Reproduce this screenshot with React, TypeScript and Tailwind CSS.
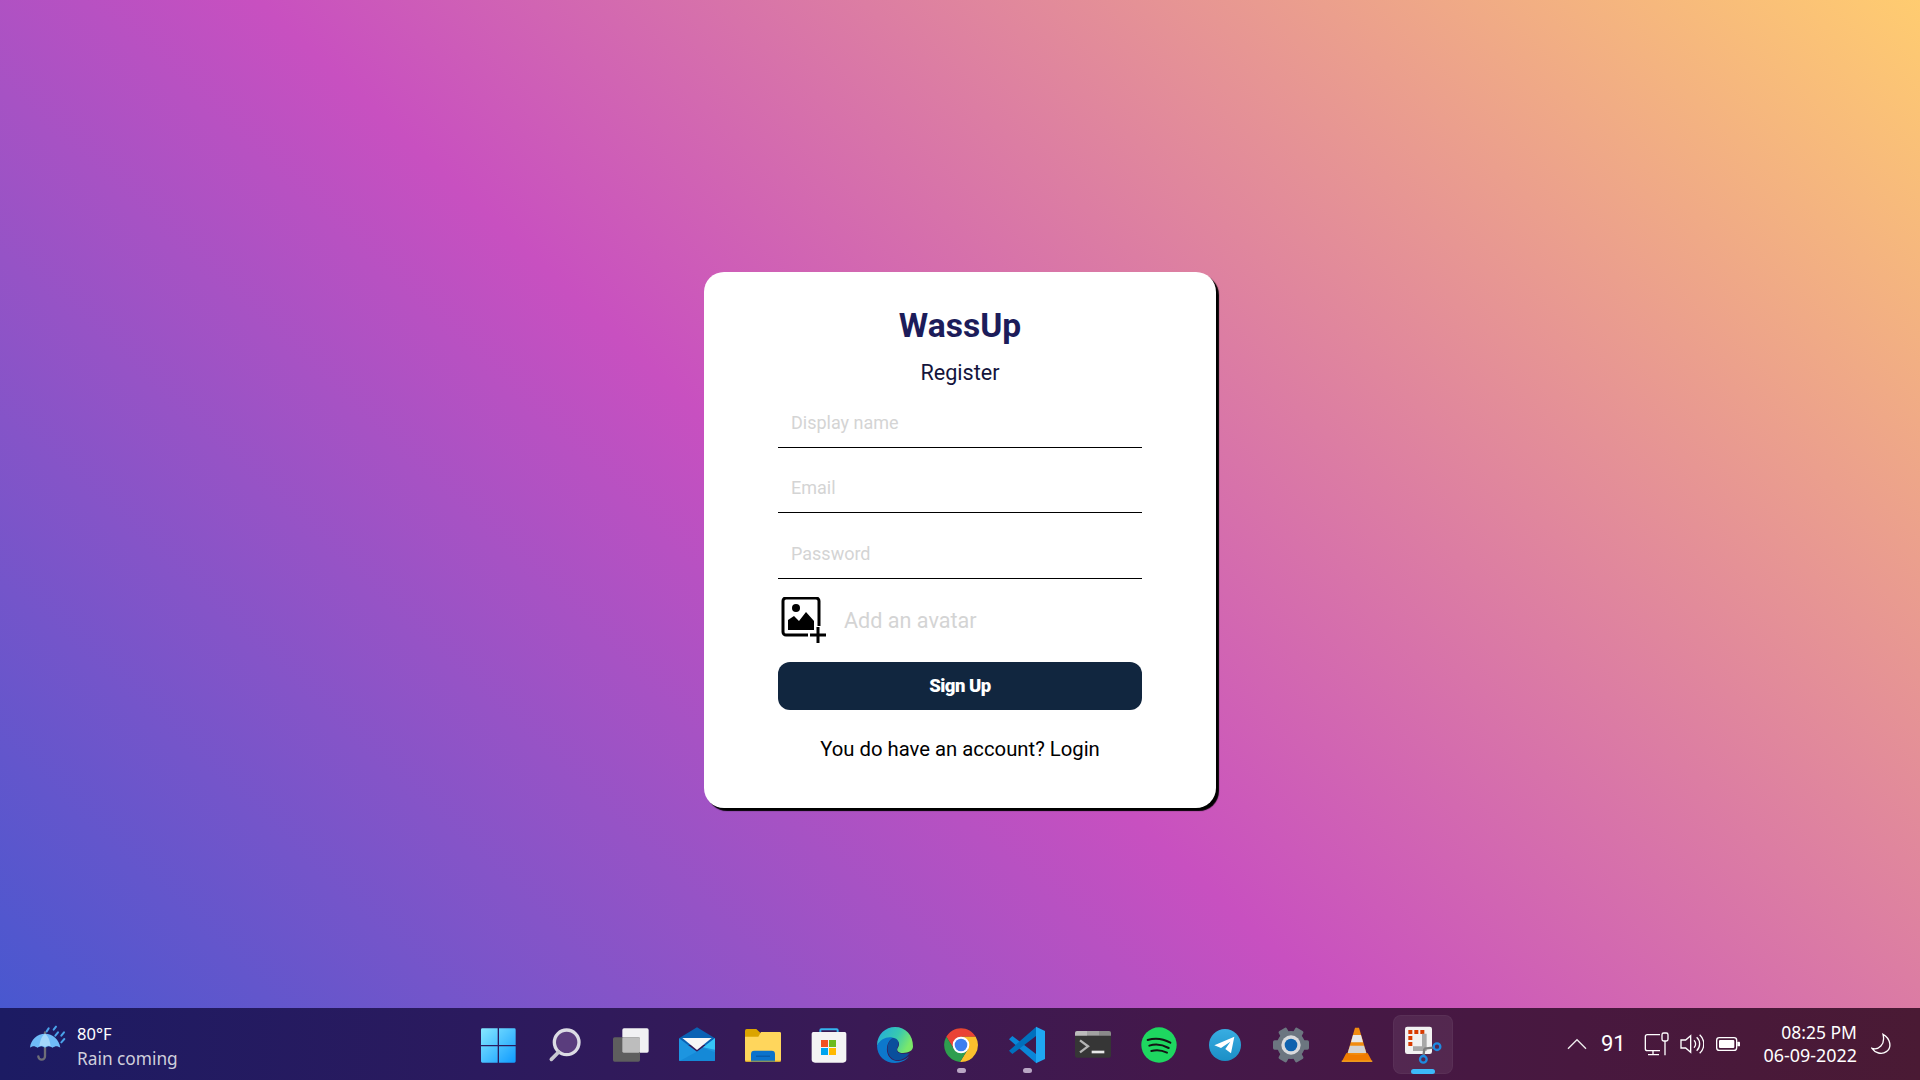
import React from 'react';

const Icon: React.FC<{ children: React.ReactNode }> = ({ children }) => (
  <svg className="w-[44px] h-[44px]" viewBox="-66 -66 132 132">{children}</svg>
);

const WindowsIcon = () => (
  <Icon>
    <defs>
      <linearGradient id="win" x1="0" y1="0" x2="1" y2="1">
        <stop offset="0" stopColor="#86e8ff" />
        <stop offset="1" stopColor="#0f9bff" />
      </linearGradient>
    </defs>
    <path fill="url(#win)" d="M-54 -46a4 4 0 0 1 4-4H-4V0H-54ZM0 -50H46a4 4 0 0 1 4 4V0H0ZM-54 4H-4V53H-50a4 4 0 0 1-4-4ZM0 4H50V49a4 4 0 0 1-4 4H0Z" />
  </Icon>
);

const SearchIcon = () => (
  <Icon>
    <circle cx="5" cy="-8" r="37" fill="#5a3d7d" stroke="#dcdce4" strokeWidth="10" />
    <path d="M-19 21L-41 43" stroke="#c8c8d0" strokeWidth="11" strokeLinecap="round" />
  </Icon>
);

const TaskViewIcon = () => (
  <Icon>
    <rect x="-26" y="-50" width="79" height="73" rx="5" fill="#f1f1f3" />
    <rect x="-54" y="-23" width="81" height="73" rx="5" fill="#5e5e5e" />
    <rect x="-26" y="-23" width="53" height="46" rx="4" fill="#bdbdbd" />
  </Icon>
);

const MailIcon = () => (
  <Icon>
    <path fill="#0a62b4" d="M-54 -20L0 -53L54 -20V0H-54Z" />
    <path fill="#f7f7f7" d="M-44 -21H44L0 15Z" />
    <path fill="#1d95e0" d="M-54 -20L0 20L54 -20V46a2 2 0 0 1-2 2H-52a2 2 0 0 1-2-2Z" />
    <path fill="#36c5f7" d="M54 -20V14L18 7Z" />
    <path fill="#0f7fd0" d="M54 48V22L18 8L-4 22L-52 48Z" opacity="0.55" />
  </Icon>
);

const FolderIcon = () => (
  <Icon>
    <path fill="#dba400" d="M-54 -43a5 5 0 0 1 5-5H-20L-4 -33V-10H-54Z" />
    <path fill="#ffd65c" d="M-54 -25L-14 -25L-6 -39H50a4 4 0 0 1 4 4V46a4 4 0 0 1-4 4H-50a4 4 0 0 1-4-4Z" />
    <path fill="#0a72cc" d="M-36 27a10 10 0 0 1 10-10H26a10 10 0 0 1 10 10V50H-36Z" />
    <rect x="-21" y="32" width="42" height="3" fill="#07529b" />
    <rect x="-54" y="47" width="108" height="3" fill="#e0a800" opacity="0.7" />
  </Icon>
);

const StoreIcon = () => (
  <Icon>
    <path d="M-26 -27V-44a3 3 0 0 1 3-3H23a3 3 0 0 1 3 3V-27" fill="none" stroke="#35b4ee" strokeWidth="6" />
    <path fill="#f4f4f4" d="M-52 -34a5 5 0 0 1 5-5H47a5 5 0 0 1 5 5V43a10 10 0 0 1-10 10H-42a10 10 0 0 1-10-10Z" />
    <rect x="-24" y="-15" width="21" height="21" fill="#f25022" />
    <rect x="0" y="-15" width="21" height="21" fill="#6cbb1f" />
    <rect x="-24" y="9" width="21" height="21" fill="#00a4ef" />
    <rect x="0" y="9" width="21" height="21" fill="#ffb900" />
  </Icon>
);

const EdgeIcon = () => (
  <Icon>
    <defs>
      <linearGradient id="edgeTop" x1="0" y1="0" x2="1" y2="0.4">
        <stop offset="0" stopColor="#22a8e0" />
        <stop offset="0.6" stopColor="#38c9b0" />
        <stop offset="1" stopColor="#7be86a" />
      </linearGradient>
    </defs>
    <path fill="url(#edgeTop)" d="M-54 2C-54 -32 -28 -54 0 -54C32 -54 54 -30 54 4C54 18 40 24 24 24C8 24 4 16 8 9C12 2 14 -4 10 -10C-2 -26 -32 -24 -54 2Z" />
    <path fill="#0d78cc" d="M-54 2C-44 -18 -24 -26 -6 -22C-22 -12 -28 8 -22 26C-16 44 2 52 22 46C30 44 38 38 42 34C32 48 16 54 0 54C-30 54 -54 32 -54 2Z" />
    <path fill="#0a4f9c" d="M-6 -22C8 -20 16 -8 8 6C2 16 8 26 22 26C30 26 38 26 44 24C34 40 14 50 -2 44C-26 34 -30 -6 -6 -22Z" />
  </Icon>
);

const ChromeIcon = () => (
  <Icon>
    <circle r="51" fill="#3a2a44" />
    <path fill="#ea4335" d="M-44 -25A51 51 0 0 1 44 -25L0 -25L-21 12Z" />
    <path fill="#fbc02d" d="M44 -25A51 51 0 0 1 -3 51L21 12L0 -25Z" />
    <path fill="#2e9e4f" d="M-3 51A51 51 0 0 1 -44 -25L-21 12L21 12Z" />
    <circle r="25" fill="#fff" />
    <circle r="19" fill="#3b7ff0" />
  </Icon>
);

const VsCodeIcon = () => (
  <Icon>
    <path fill="#0a86d8" d="M-54 -17L-44 -27L28 28V55Z" />
    <path fill="#0070bd" d="M28 -55V-28L-44 27L-54 17Z" />
    <path fill="#1fa7f2" d="M27 -55L54 -42V42L27 55Z" />
  </Icon>
);

const TerminalIcon = () => (
  <Icon>
    <rect x="-54" y="-42" width="108" height="80" rx="6" fill="#363636" />
    <path fill="#bcbcbc" d="M-54 -36a6 6 0 0 1 6-6H-18V-28H-54Z" />
    <rect x="-18" y="-42" width="36" height="14" fill="#a2a2a2" />
    <path fill="#8a8a8a" d="M18 -42H48a6 6 0 0 1 6 6V-28H18Z" />
    <path d="M-39 -14L-15 4L-39 22" fill="none" stroke="#b4b4b4" strokeWidth="7" />
    <rect x="-4" y="17" width="38" height="8" fill="#e8e8e8" />
  </Icon>
);

const SpotifyIcon = () => (
  <Icon>
    <circle r="53" fill="#1ed760" />
    <g fill="none" stroke="#141414" strokeWidth="6" strokeLinecap="round">
      <path d="M-34 -15Q0 -26 34 -7" />
      <path d="M-29 2Q0 -7 29 9" />
      <path d="M-23 18Q0 11 24 23" />
    </g>
  </Icon>
);

const TelegramIcon = () => (
  <Icon>
    <defs>
      <linearGradient id="tg" x1="0" y1="0" x2="0" y2="1">
        <stop offset="0" stopColor="#38ade2" />
        <stop offset="1" stopColor="#1b8fc6" />
      </linearGradient>
    </defs>
    <circle r="48" fill="url(#tg)" />
    <path fill="#fff" d="M-32 1L28 -25L18 25L1 12L16 -10L-12 9Z" />
  </Icon>
);

const SettingsIcon = () => (
  <Icon>
    <g fill="#6c7680">
      <circle r="42" />
      {[0, 60, 120, 180, 240, 300].map(a => (
        <rect key={a} x="32" y="-14" width="22" height="28" rx="5" transform={`rotate(${a})`} />
      ))}
    </g>
    <circle r="29" fill="#d9dadc" />
    <circle r="19" fill="#0f62ae" />
  </Icon>
);

const VlcIcon = () => (
  <Icon>
    <path fill="#f28c0f" d="M-6 -52H6L30 30H-30Z" />
    <path fill="#e8e8e8" d="M-12 -30H12L18 -8H-18Z" />
    <path fill="#d4d4d4" d="M-21 2H21L28 24H-28Z" />
    <path fill="#f07c00" d="M-32 24C-20 32 20 32 32 24L46 50H-46Z" />
    <path fill="#fdb52a" d="M-46 47H46V50H-46Z" />
  </Icon>
);

const SnipIcon = () => (
  <Icon>
    <rect x="-54" y="-55" width="81" height="82" rx="7" fill="#f2f2f2" />
    <g fill="#d83b01">
      <rect x="-44" y="-45" width="12" height="12" />
      <rect x="-26" y="-45" width="12" height="12" />
      <rect x="-8" y="-45" width="12" height="12" />
      <rect x="-44" y="-27" width="12" height="12" />
      <rect x="-44" y="-9" width="12" height="12" />
    </g>
    <path d="M-30 11H4V-34" fill="none" stroke="#a8a8a8" strokeWidth="14" />
    <path d="M4 11L36 7M4 11L1 36" stroke="#7c7c7c" strokeWidth="7" />
    <circle cx="42" cy="5" r="10" fill="none" stroke="#1e8ae0" strokeWidth="7" />
    <circle cx="1" cy="43" r="10" fill="none" stroke="#1e8ae0" strokeWidth="7" />
  </Icon>
);

const apps = [
  { key: 'windows', icon: <WindowsIcon /> },
  { key: 'search', icon: <SearchIcon /> },
  { key: 'taskview', icon: <TaskViewIcon /> },
  { key: 'mail', icon: <MailIcon /> },
  { key: 'folder', icon: <FolderIcon /> },
  { key: 'store', icon: <StoreIcon /> },
  { key: 'edge', icon: <EdgeIcon /> },
  { key: 'chrome', icon: <ChromeIcon />, running: true },
  { key: 'vscode', icon: <VsCodeIcon />, running: true },
  { key: 'terminal', icon: <TerminalIcon /> },
  { key: 'spotify', icon: <SpotifyIcon /> },
  { key: 'telegram', icon: <TelegramIcon /> },
  { key: 'settings', icon: <SettingsIcon /> },
  { key: 'vlc', icon: <VlcIcon /> },
  { key: 'snip', icon: <SnipIcon />, active: true },
];

const Taskbar = () => (
  <div className="absolute bottom-0 left-0 right-0 h-[72px] grid grid-cols-[1fr_auto_1fr] items-center bg-[linear-gradient(90deg,#1c1b63_0%,#2b1a5e_25%,#3a1a55_45%,#44184a_62%,#48183f_82%,#4a1a34_100%)] font-['Noto_Sans',sans-serif] text-white">
    {/* weather */}
    <div className="flex items-center pl-[28px] gap-[11px]">
      <svg className="w-[38px] h-[40px]" viewBox="84 75 114 120">
        <path d="M135 100V172a10 10 0 0 1-20 0" fill="none" stroke="#6e6e78" strokeWidth="7" strokeLinecap="round" />
        <path fill="#6fbcf8" d="M90 146C92 122 112 104 135 104C158 104 178 122 181 146C172 140 166 140 158 146C150 140 142 140 135 146C128 140 120 140 112 146C104 140 98 140 90 146Z" />
        <path fill="#a4d8fb" d="M118 142C120 124 126 110 135 104C144 110 150 124 152 142C146 139 140 140 135 144C130 140 124 139 118 142Z" />
        <g stroke="#4aa3ea" strokeWidth="6" strokeLinecap="round">
          <path d="M140 97L146 88M161 92L168 83M166 110L174 100M184 110L192 100M184 130L193 120" />
        </g>
      </svg>
      <div className="flex flex-col pt-[3px]">
        <span className="text-[16.5px] leading-[25px]">80°F</span>
        <span className="text-[17.3px] leading-[25px] text-[#d0cfdc]">Rain coming</span>
      </div>
    </div>

    {/* pinned apps */}
    <div className="flex items-center ml-[2px]">
      {apps.map(app => (
        <div key={app.key} className="relative w-[66px] h-[72px] flex items-center justify-center pt-[2px]">
          {app.active && <div className="absolute left-[3px] top-[7px] w-[60px] h-[59px] rounded-[8px] bg-white/[0.07] border border-white/[0.04]" />}
          <div className="relative">{app.icon}</div>
          {app.running && <div className="absolute bottom-[7px] left-[29px] w-[9px] h-[5px] rounded-full bg-[#b9a6c4]" />}
          {app.active && <div className="absolute bottom-[6px] left-[21px] w-[24px] h-[5px] rounded-full bg-[#3cb9f9]" />}
        </div>
      ))}
    </div>

    {/* tray */}
    <div className="flex items-center justify-end pr-[29px]">
      <svg className="w-[20px] h-[12px] mr-[14px]" viewBox="0 0 60 36">
        <path d="M3 32L30 5L57 32" fill="none" stroke="#eee" strokeWidth="4" />
      </svg>
      <span className="w-[22px] font-['Roboto',sans-serif] text-[22px] leading-none mr-[21px]">91</span>
      <svg className="w-[25px] h-[24px] mr-[11px]" viewBox="310 66 75 72" fill="none" stroke="#fff" strokeWidth="4">
        <path d="M358 122H320a6 6 0 0 1-6-6V80a6 6 0 0 1 6-6H358" />
        <path d="M337 122V133M322 134H355" />
        <rect x="364" y="69" width="18" height="24" rx="5" />
        <path d="M373 93V136" />
      </svg>
      <svg className="w-[24px] h-[24px] mr-[12px]" viewBox="420 68 72 72" fill="none" stroke="#fff" strokeWidth="4">
        <path d="M423 92H437L452 79V129L437 116H423Z" />
        <path d="M462 93a15 15 0 0 1 0 22M470 84a27 27 0 0 1 0 40M479 76a38 38 0 0 1 0 56" />
      </svg>
      <svg className="w-[24px] h-[14px] mr-[24px]" viewBox="528 83 72 42">
        <rect x="530" y="85" width="60" height="38" rx="8" fill="none" stroke="#fff" strokeWidth="4" />
        <rect x="537" y="92" width="46" height="24" rx="3" fill="#fff" />
        <rect x="592" y="97" width="8" height="14" rx="2" fill="#fff" />
      </svg>
      <div className="flex flex-col items-end w-[93px] leading-[23px] mr-[14px] whitespace-nowrap">
        <span className="text-[17.5px]">08:25 PM</span>
        <span className="text-[17.9px]">06-09-2022</span>
      </div>
      <svg className="w-[20px] h-[22px]" viewBox="990 68 60 66" fill="none" stroke="#fff" strokeWidth="4">
        <path d="M1026 72C1048 84 1054 112 1036 124C1022 134 1002 128 993 114C1012 120 1034 104 1026 72Z" />
      </svg>
    </div>
  </div>
);

const fields = ['Display name', 'Email', 'Password'];

export default function App() {
  return (
    <div className="relative h-screen w-full overflow-hidden flex items-center justify-center bg-[linear-gradient(43deg,#4158D0_0%,#C850C0_46%,#FFCC70_100%)] font-['Roboto',sans-serif]">
      <div className="w-[512px] h-[536px] bg-white rounded-[20px] shadow-[3px_3px_1px_#000] px-[74px] pt-[35px] flex flex-col">
        <h1 className="text-center text-[33.6px] leading-[38px] font-bold text-[#1c1c5a]">WassUp</h1>
        <p className="mt-[16px] text-center text-[21.6px] leading-[24px] text-[#14143c]">Register</p>

        <form className="mt-[13px] flex flex-col">
          <div className="flex flex-col">
            {fields.map((f, i) => (
              <input
                key={f}
                placeholder={f}
                className={`h-[50px] w-full px-[13px] text-[18px] border-b border-black outline-none placeholder:text-[#d4d4d4] ${i === 1 ? 'mt-[15px]' : i === 2 ? 'mt-[16px]' : ''}`}
              />
            ))}
          </div>

          <label className="mt-[18px] ml-[3px] flex items-center gap-[17px]">
            <svg className="w-[46px] h-[46px]" viewBox="0 0 46 46">
              <path d="M27 38H5a3 3 0 0 1-3-3V4a3 3 0 0 1 3-3H35a3 3 0 0 1 3 3V29" fill="none" stroke="#000" strokeWidth="3" />
              <circle cx="15" cy="11" r="4" />
              <path d="M7 33V23L13 19L18 24L25 15L33 24V33Z" />
              <path d="M37 30V46M29 38H45" stroke="#000" strokeWidth="3" />
            </svg>
            <span className="pt-[2px] text-[21.6px] text-[#d4d4d4]">Add an avatar</span>
          </label>

          <button type="button" className="mt-[19px] h-[48px] w-full pt-[2px] rounded-[12px] bg-[#11263f] text-white text-[18.5px] font-black tracking-[-0.5px]">
            Sign Up
          </button>
        </form>

        <p className="mt-[27px] text-center text-[20.3px] leading-[24px] text-black">You do have an account? Login</p>
      </div>

      <Taskbar />
    </div>
  );
}
